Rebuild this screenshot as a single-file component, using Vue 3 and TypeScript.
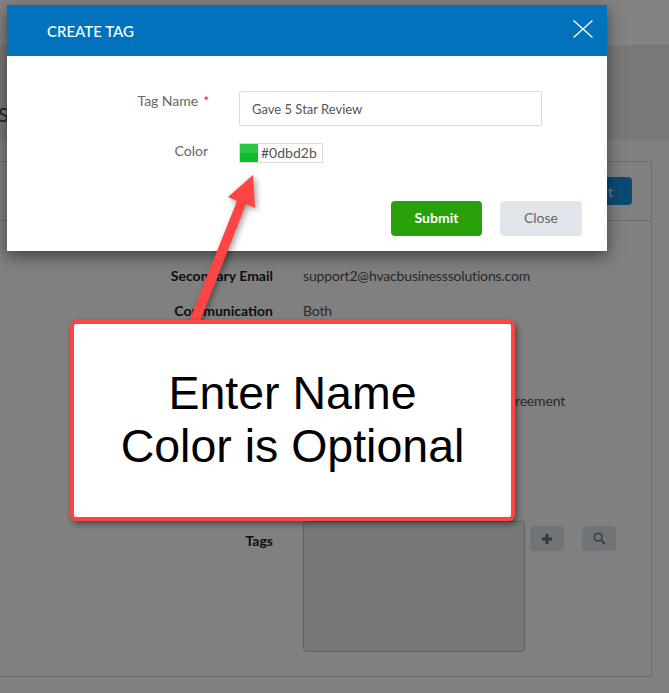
<script setup lang="ts">
interface DetailRow { label: string; value: string; height: number; offset: number }
const rows: DetailRow[] = [
  { label: 'Secondary Email', value: 'support2@hvacbusinesssolutions.com', height: 35, offset: 30 },
  { label: 'Communication', value: 'Both', height: 90, offset: 30 },
  { label: '', value: 'reement', height: 129, offset: 242 },
]
</script>

<template>
  <div class="page">
    <div class="topbar"></div>
    <div class="band"><span class="page-title">S</span></div>
    <section class="panel">
      <div class="panel-head"><button class="edit">Edit</button></div>
      <div class="panel-body">
        <div v-for="row in rows" :key="row.value" class="row" :style="{ height: row.height + 'px' }">
          <span class="row-label">{{ row.label }}</span>
          <span class="row-value" :style="{ marginLeft: row.offset + 'px' }">{{ row.value }}</span>
        </div>
        <div class="row">
          <span class="row-label tags-label">Tags</span>
          <div class="tags-box"></div>
          <button class="icon-btn plus-btn" aria-label="Add">
            <svg width="12" height="12" viewBox="0 0 12 12"><path d="M6 1v10M1 6h10" stroke="#2f3a44" stroke-width="3" /></svg>
          </button>
          <button class="icon-btn" aria-label="Search">
            <svg width="13" height="13" viewBox="0 0 13 13" fill="none" stroke="#3a4149"><circle cx="5.2" cy="5.2" r="3.9" stroke-width="1.7" /><path d="M8.2 8.2l3.8 3.8" stroke-width="2.2" /></svg>
          </button>
        </div>
      </div>
    </section>

    <div class="modal">
      <header class="modal-head">
        <h2>CREATE TAG</h2>
        <svg class="close-x" width="20" height="18" viewBox="0 0 20 18"><path d="M.5.5l19 17M19.5.5l-19 17" stroke="#fff" stroke-width="1.3" fill="none" /></svg>
      </header>
      <div class="modal-body">
        <div class="form-row name-row">
          <label>Tag Name <em>*</em></label>
          <div class="text-input">Gave 5 Star Review</div>
        </div>
        <div class="form-row color-row">
          <label>Color</label>
          <div class="color-field"><span class="swatch"></span><span class="hex">#0dbd2b</span></div>
        </div>
        <div class="modal-actions">
          <button class="submit">Submit</button>
          <button class="close">Close</button>
        </div>
      </div>
    </div>

    <svg class="arrow" width="669" height="693" viewBox="0 0 669 693">
      <polygon points="253,175 255,208 246,204 199,324 188,324 237,201 228,197" fill="#ff4444" />
    </svg>

    <div class="callout">Enter Name<br />Color is Optional</div>
  </div>
</template>

<style scoped>
.page {
  position: relative;
  width: 669px;
  height: 693px;
  overflow: hidden;
  background: #808080;
  font-family: Lato, "Open Sans", sans-serif;
  font-size: 14px;
}
.topbar { height: 45px; background: #838383; }
.band {
  height: 95px;
  background: #797979;
  box-sizing: border-box;
  padding-top: 56px;
  line-height: 26px;
}
.page-title { display: block; margin-left: -2px; font-size: 20px; color: #1c2430; }
.panel {
  box-sizing: border-box;
  width: 653px;
  height: 516px;
  margin: 21px 0 0 -1px;
  border: 1px solid #6d6d6d;
}
.panel-head {
  display: flex;
  justify-content: flex-end;
  box-sizing: border-box;
  height: 59px;
  padding: 15px 19px 0 0;
  border-bottom: 1px solid #6d6d6d;
}
.edit {
  width: 70px;
  height: 28px;
  padding: 0 19px 0 0;
  border: 0;
  border-radius: 4px;
  background: #0d4a73;
  color: #6d8ea5;
  font: 14px Lato, sans-serif;
  text-align: right;
}
.panel-body { padding-top: 46px; }
.row { display: flex; align-items: flex-start; line-height: 18px; }
.row-label { width: 273px; flex: none; text-align: right; font-weight: 700; color: #0e0e0e; }
.row-value { color: #2a2a2a; white-space: nowrap; letter-spacing: -0.17px; }
.tags-label { margin-top: 11px; }
.tags-box {
  box-sizing: border-box;
  width: 222px;
  height: 131px;
  margin-left: 30px;
  border: 1px solid #626262;
  border-radius: 4px;
  background: #777977;
}
.icon-btn {
  display: flex;
  align-items: center;
  justify-content: center;
  width: 34px;
  height: 25px;
  margin: 5px 0 0 18px;
  padding: 0;
  border: 0;
  border-radius: 4px;
  background: #6f7479;
}
.plus-btn { margin-left: 5px; }

.modal {
  position: absolute;
  left: 7px;
  top: 5px;
  width: 600px;
  height: 246px;
  background: #fff;
  box-shadow: 0 5px 15px rgba(0, 0, 0, 0.5);
}
.modal-head {
  display: flex;
  align-items: center;
  justify-content: space-between;
  height: 51px;
  padding: 0 14px 0 40px;
  background: #0372bc;
}
.modal-head h2 {
  margin: 0;
  color: #fff;
  font-size: 15px;
  font-weight: 500;
}
.close-x { margin-top: -3px; }
.modal-body { padding-top: 35px; }
.form-row { display: flex; align-items: flex-start; }
.form-row label {
  box-sizing: border-box;
  width: 232px;
  padding-right: 31px;
  text-align: right;
  color: #666;
  line-height: 20px;
}
.form-row em { color: #e00; font-style: normal; font-size: 13px; margin-left: 2px; }
.name-row label { padding-right: 30px; letter-spacing: -0.05px; }
.color-row { margin-top: 17px; }
.color-row label { margin-top: -2px; }
.text-input {
  box-sizing: border-box;
  width: 303px;
  height: 35px;
  padding-left: 12px;
  border: 1px solid #ddd;
  border-radius: 2px;
  color: #555;
  font-size: 13px;
  line-height: 34px;
}
.color-field {
  display: flex;
  box-sizing: border-box;
  width: 84px;
  height: 20px;
  border: 1px solid #ddd;
  color: #555;
}
.swatch {
  width: 18px;
  height: 18px;
  background: linear-gradient(#2ac644 0 50%, #0dbd2b 50%);
}
.hex { margin-left: 3px; line-height: 18px; }
.modal-actions {
  display: flex;
  gap: 18px;
  margin: 38px 0 0 384px;
}
.modal-actions button {
  height: 35px;
  padding: 0 0 2px;
  border: 0;
  border-radius: 4px;
  font: 14px Lato, sans-serif;
}
.modal-actions .submit { width: 91px; background: #28a10a; color: #fff; font-weight: 700; }
.modal-actions .close { width: 82px; background: #e1e5ec; color: #666; }

.arrow {
  position: absolute;
  left: 0;
  top: 0;
  filter: drop-shadow(2px 2px 3px rgba(0, 0, 0, 0.4));
  pointer-events: none;
}
.callout {
  position: absolute;
  left: 70px;
  top: 320px;
  box-sizing: border-box;
  display: flex;
  flex-direction: column;
  justify-content: center;
  width: 445px;
  height: 201px;
  padding-bottom: 2px;
  border: 4px solid #ff4444;
  border-radius: 6px;
  background: #fff;
  box-shadow: 2px 3px 6px rgba(0, 0, 0, 0.45);
  color: #000;
  font-family: "Liberation Sans", Arial, sans-serif;
  font-size: 46.5px;
  line-height: 53px;
  text-align: center;
}
</style>

<style>
html, body { margin: 0; background: #808080; }
</style>
